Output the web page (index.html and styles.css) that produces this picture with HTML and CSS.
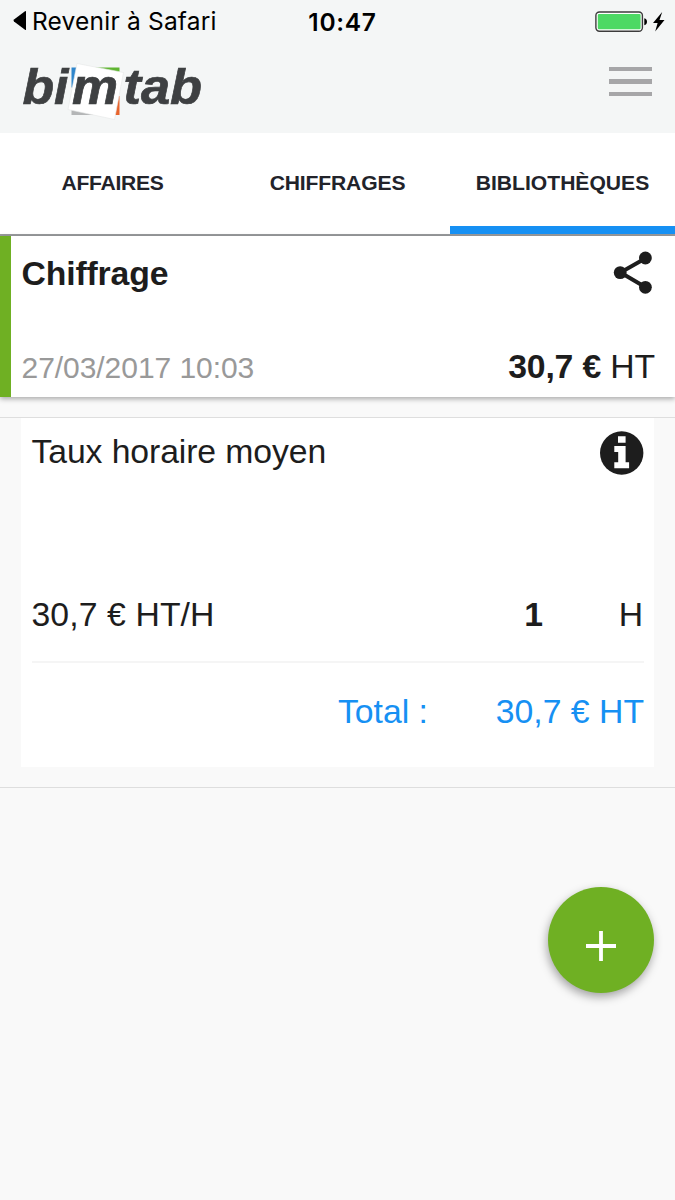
FILE: index.html
```html
<!DOCTYPE html>
<html lang="fr">
<head>
<meta charset="utf-8">
<title>bimtab</title>
<link rel="stylesheet" href="styles.css">
</head>
<body>
<header class="header">
  <div class="status">
    <div class="status-back">
      <svg width="14" height="22" viewBox="0 0 14 22"><path d="M13 1.500v18q0 1-1 .3L1 11.600q-1-1.100 0-2.200L12 1.200q1-.7 1 .3z"/></svg>
      <span>Revenir à Safari</span>
    </div>
    <div class="status-time">10:47</div>
    <div class="status-power">
      <svg width="72" height="24" viewBox="0 0 72 24">
        <rect x=".9" y="2" width="46.500" height="19.200" rx="3.500" fill="#fff" stroke="#3c3c3c" stroke-width="1.400"/>
        <rect x="2.800" y="3.900" width="42.800" height="15.400" rx="1.200" fill="#4cd964"/>
        <path d="M49.300 8.200q2.700.6 2.700 3.500t-2.700 3.500z"/>
        <path d="M67.200 2 58 13h4.600l-2.400 8.500L69.500 10h-5z"/>
      </svg>
    </div>
  </div>
  <div class="brand-row">
    <svg class="logo" width="190" height="64" viewBox="0 0 190 64">
      <path fill="#2f86cc" d="M51.500 9.500H62v20H51.500z"/>
      <path fill="#5fb531" d="M75 9.500h24.500v20H75z"/>
      <path fill="#e8642c" d="M88 38h11.500v19H88z"/>
      <path fill="#b4b6b7" d="M51.500 42h26v15h-26z"/>
      <path fill="#fff" stroke="#e6e8e8" stroke-width=".6" d="M57 5.500 103.500 14.500 94.500 61.500 48 51.500z"/>
      <g class="logo-text">
        <text x="2.500" y="46.300" textLength="46" lengthAdjust="spacingAndGlyphs">bi</text>
        <text x="52" y="46.300" textLength="46" lengthAdjust="spacingAndGlyphs">m</text>
        <text x="103.500" y="46.300" textLength="78.500" lengthAdjust="spacingAndGlyphs">tab</text>
      </g>
    </svg>
    <div class="menu"><i></i><i></i><i></i></div>
  </div>
</header>
<nav class="tabs">
  <a class="tab tab-first">AFFAIRES</a>
  <a class="tab tab-second">CHIFFRAGES</a>
  <a class="tab tab-active">BIBLIOTHÈQUES</a>
</nav>
<section class="quote">
  <div class="quote-row">
    <h1 class="quote-title">Chiffrage</h1>
    <svg class="share" width="40" height="44" viewBox="0 0 40 44">
      <path d="M33 8 7.500 22.500 33 37.500" fill="none" stroke="#1d1d1d" stroke-width="4"/>
      <circle cx="32.400" cy="8" r="6.400"/><circle cx="7.200" cy="22.600" r="6.400"/><circle cx="32.400" cy="37.300" r="6.400"/>
    </svg>
  </div>
  <div class="quote-row">
    <span class="quote-date">27/03/2017 10:03</span>
    <span class="quote-price"><b>30,7 €</b> HT</span>
  </div>
</section>
<main class="list">
  <article class="card">
    <div class="card-head">
      <span class="card-title">Taux horaire moyen</span>
      <svg class="info" width="44" height="44" viewBox="0 0 44 44">
        <circle cx="21.700" cy="22" r="21.700"/>
        <path fill="#fff" d="M18 5.200h7.600v6.500H18zM14.300 15h11.300v16.300h3.500v6H14.300v-6h3.900V21h-3.900z"/>
      </svg>
    </div>
    <div class="card-rate">
      <span class="rate">30,7 € HT/H</span>
      <b class="qty">1</b>
      <span class="unit">H</span>
    </div>
    <div class="card-total">
      <span class="total-label">Total :</span>
      <span class="total-value">30,7 € HT</span>
    </div>
  </article>
</main>
<button class="add" aria-label="Ajouter">
  <svg width="30" height="30" viewBox="0 0 30 30"><path d="M15 0v30M0 15h30" stroke="#fff" stroke-width="3.800"/></svg>
</button>
</body>
</html>
```
FILE: styles.css
```css
* { box-sizing: border-box; }
body {
  margin: 0;
  height: 1200px;
  overflow: hidden;
  background: #f9f9f9;
  color: #1d1d1d;
  font: 33.75px/40px "Liberation Sans", Arial, sans-serif;
}
svg { display: block; flex: none; }
.header { height: 133px; background: #f4f6f6; }
.status {
  display: grid;
  grid-template-columns: 1fr 90px 1fr;
  align-items: center;
  height: 43px;
  padding: 0 8px 0 13px;
  color: #000;
  font: 24.5px/30px Inter, sans-serif;
}
.status-back {
  display: flex;
  align-items: center;
  gap: 5px;
  padding-bottom: 2px;
  letter-spacing: .2px;
  white-space: nowrap;
}
.status-time { padding-left: 5px; text-align: center; font-weight: 600; letter-spacing: .7px; }
.status-power { display: flex; justify-content: flex-end; }
.brand-row { display: flex; justify-content: space-between; padding: 15px 23px 0 20px; }
.logo-text {
  fill: #3e4042;
  stroke: #3e4042;
  stroke-width: .7px;
  font: italic bold 50px "Liberation Sans", Arial, sans-serif;
}
.menu { display: flex; flex-direction: column; gap: 8px; width: 43px; padding-top: 8.5px; }
.menu i { height: 4.5px; background: #a6a6a8; }
.tabs {
  display: grid;
  grid-template-columns: repeat(3, 1fr);
  height: 103px;
  background: #fff;
  border-bottom: 2px solid #999b9d;
}
.tab {
  display: flex;
  align-items: center;
  justify-content: center;
  padding-top: 6px;
  border-bottom: 8px solid transparent;
  color: #22232a;
  font-size: 21.1px;
  font-weight: bold;
}
.tab-first { letter-spacing: -.3px; }
.tab-second { letter-spacing: -.15px; }
.tab-active { border-color: #1690f3; }
.quote {
  display: flex;
  flex-direction: column;
  justify-content: space-between;
  height: 161px;
  padding: 14px 20px 9px 10.5px;
  border-left: 11px solid #6fb023;
  background: #fff;
  box-shadow: 0 2px 5px rgba(0, 0, 0, .32);
}
.quote-row { display: flex; justify-content: space-between; height: 44px; }
.quote-title { margin: 3px 0 0; font-size: 33.75px; line-height: 40px; letter-spacing: -.15px; }
.share { margin-right: 2px; fill: #1d1d1d; }
.quote-date { color: #999; font-size: 30px; line-height: 48px; letter-spacing: -.05px; }
.quote-price { line-height: 44px; letter-spacing: -.15px; }
.list {
  height: 371px;
  margin-top: 20px;
  padding: 0 21px 20px;
  border-top: 1px solid #dedede;
  border-bottom: 1px solid #dedede;
}
.card { height: 349px; padding: 0 10px 0 10.5px; background: #fff; }
.card-head { display: flex; justify-content: space-between; height: 176px; padding-top: 13px; }
.card-title { letter-spacing: -.1px; }
.info { fill: #1d1d1d; }
.card-rate {
  display: grid;
  grid-template-columns: 1fr 60px 101px;
  height: 69px;
  border-bottom: 2px solid #f5f5f5;
}
.rate { letter-spacing: .1px; }
.qty, .unit, .total-value { text-align: right; }
.unit { padding-right: 1px; }
.card-total {
  display: grid;
  grid-template-columns: 1fr 216px;
  padding-top: 28px;
  text-align: right;
  color: #1690f3;
}
.add {
  position: absolute;
  left: 548px;
  top: 887px;
  display: flex;
  align-items: center;
  justify-content: center;
  width: 106px;
  height: 106px;
  padding: 12px 0 0;
  border: 0;
  border-radius: 50%;
  background: #6fb023;
  box-shadow: -1px 4px 10px rgba(0, 0, 0, .35);
}
```
